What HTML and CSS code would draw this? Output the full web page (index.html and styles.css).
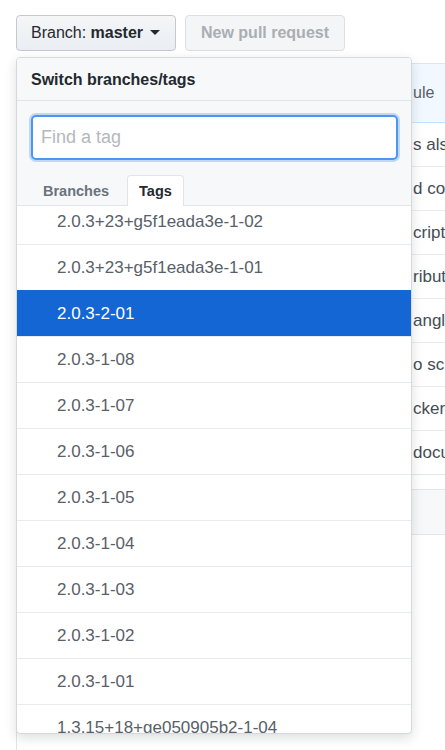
FILE: index.html
```html
<!DOCTYPE html>
<html lang="en">

<head>
    <meta charset="UTF-8">
    <meta name="viewport" content="width=device-width, initial-scale=1.0">
    <title>Switch branches/tags</title>
    <link rel="stylesheet" href="styles.css">
</head>

<body>
    <div class="page">
        <div class="toolbar">
            <div class="branch-wrap">
                <button class="btn">Branch: <strong>master</strong> <span class="caret"></span></button>

                <div class="dropdown">
                    <div class="dropdown-header">Switch branches/tags</div>
                    <div class="dropdown-filter">
                        <input type="text" class="filter-input" placeholder="Find a tag">
                        <div class="tabs">
                            <span class="tab">Branches</span>
                            <span class="tab selected">Tags</span>
                        </div>
                    </div>
                    <div class="dropdown-list">
                        <ul>
                            <li>2.0.3+23+g5f1eada3e-1-02</li>
                            <li>2.0.3+23+g5f1eada3e-1-01</li>
                            <li class="active">2.0.3-2-01</li>
                            <li>2.0.3-1-08</li>
                            <li>2.0.3-1-07</li>
                            <li>2.0.3-1-06</li>
                            <li>2.0.3-1-05</li>
                            <li>2.0.3-1-04</li>
                            <li>2.0.3-1-03</li>
                            <li>2.0.3-1-02</li>
                            <li>2.0.3-1-01</li>
                            <li>1.3.15+18+ge050905b2-1-04</li>
                            <li>1.3.15+18+ge050905b2-1-03</li>
                        </ul>
                    </div>
                </div>
            </div>
            <button class="btn btn-disabled" disabled>New pull request</button>
        </div>

        <div class="file-box">
            <div class="file-header">ule</div>
            <div class="file-row">s also</div>
            <div class="file-row">d com</div>
            <div class="file-row">cripts</div>
            <div class="file-row">ributo</div>
            <div class="file-row">angle</div>
            <div class="file-row">o scr</div>
            <div class="file-row">cker</div>
            <div class="file-row">docu</div>
        </div>

        <div class="readme-box">
            <div class="readme-header"></div>
            <div class="readme-body"></div>
        </div>
    </div>
</body>

</html>
```

FILE: styles.css
```css
body {
    font-family: "Liberation Sans", Arial, sans-serif;
    background-color: #fff;
    color: #24292e;
    margin: 0;
    padding: 0;
    overflow: hidden;
    height: 750px;
}

.page {
    padding: 15px 0 0 16px;
}

.toolbar {
    display: flex;
    gap: 9px;
}

.branch-wrap {
    position: relative;
}

.btn {
    width: 160px;
    height: 36px;
    padding: 0 14px;
    font-family: inherit;
    font-size: 16px;
    color: #24292e;
    text-align: left;
    background: linear-gradient(#f4f6f8, #eaeef2);
    border: 1px solid #c5c8cc;
    border-radius: 4px;
}

.btn strong {
    font-weight: bold;
}

.caret {
    display: inline-block;
    width: 0;
    height: 0;
    margin-left: 2px;
    vertical-align: 3px;
    border-top: 5px solid #24292e;
    border-left: 5px solid transparent;
    border-right: 5px solid transparent;
}

.btn-disabled {
    font-size: 16px;
    font-weight: bold;
    color: #a9aeb3;
    text-align: center;
    background: #f3f5f7;
    border-color: #dcdfe2;
}

.dropdown {
    position: absolute;
    top: 42px;
    left: 0;
    z-index: 10;
    width: 396px;
    height: 677px;
    box-sizing: border-box;
    display: flex;
    flex-direction: column;
    background-color: #fff;
    border: 1px solid #d5d8dc;
    border-radius: 4px;
    box-shadow: 0 4px 12px rgba(27, 31, 35, 0.15);
    overflow: hidden;
}

.dropdown-header {
    height: 42px;
    line-height: 43px;
    padding: 0 14px;
    font-size: 16px;
    font-weight: bold;
    background-color: #f6f8fa;
    border-bottom: 1px solid #e1e4e8;
}

.dropdown-filter {
    padding: 14px 13px 0 14px;
    background-color: #f6f8fa;
    border-bottom: 1px solid #e1e4e8;
}

.filter-input {
    display: block;
    width: 100%;
    height: 45px;
    box-sizing: border-box;
    padding: 0 8px;
    font-family: inherit;
    font-size: 18px;
    color: #24292e;
    background: #fff;
    border: 2px solid #4a97f5;
    border-radius: 5px;
    box-shadow: 0 0 0 2px rgba(3, 102, 214, 0.22);
    outline: none;
    caret-color: #24292e;
}

.filter-input::placeholder {
    color: #b4b8bd;
}

.tabs {
    display: flex;
    margin-top: 15px;
    padding-left: 1px;
    height: 30px;
}

.tab {
    padding: 0 11px;
    font-size: 14.5px;
    font-weight: bold;
    line-height: 32px;
    color: #6a737d;
}

.tab.selected {
    margin-left: 7px;
    margin-bottom: -1px;
    color: #24292e;
    background-color: #fff;
    border: 1px solid #e1e4e8;
    border-bottom: none;
    border-radius: 4px 4px 0 0;
    line-height: 31px;
}

.dropdown-list {
    flex: 1;
    overflow: hidden;
}

.dropdown-list ul {
    list-style-type: none;
    margin: -8px 0 0 0;
    padding: 0;
}

.dropdown-list li {
    height: 45px;
    line-height: 45px;
    padding-left: 40px;
    font-size: 17px;
    color: #586069;
    border-top: 1px solid #e8eaed;
}

.dropdown-list li.active {
    color: #fff;
    background-color: #1366d3;
    border-top-color: #1366d3;
}

.file-box {
    width: 600px;
    margin-top: 12px;
    border: 1px solid #e1e4e8;
    border-radius: 4px;
}

.file-header {
    height: 58px;
    line-height: 58px;
    padding-left: 396px;
    font-size: 16px;
    color: #586069;
    background-color: #f1f8ff;
    border-bottom: 1px solid #c8e1ff;
}

.file-row {
    height: 43px;
    line-height: 43px;
    padding-left: 396px;
    font-size: 17px;
    color: #444d56;
    border-top: 1px solid #eaecef;
}

.file-header + .file-row {
    border-top: none;
}

.readme-box {
    width: 600px;
    margin-top: 14px;
    border: 1px solid #e1e4e8;
    border-radius: 4px;
}

.readme-header {
    height: 44px;
    background-color: #f6f8fa;
    border-bottom: 1px solid #e1e4e8;
}

.readme-body {
    height: 300px;
}
```
